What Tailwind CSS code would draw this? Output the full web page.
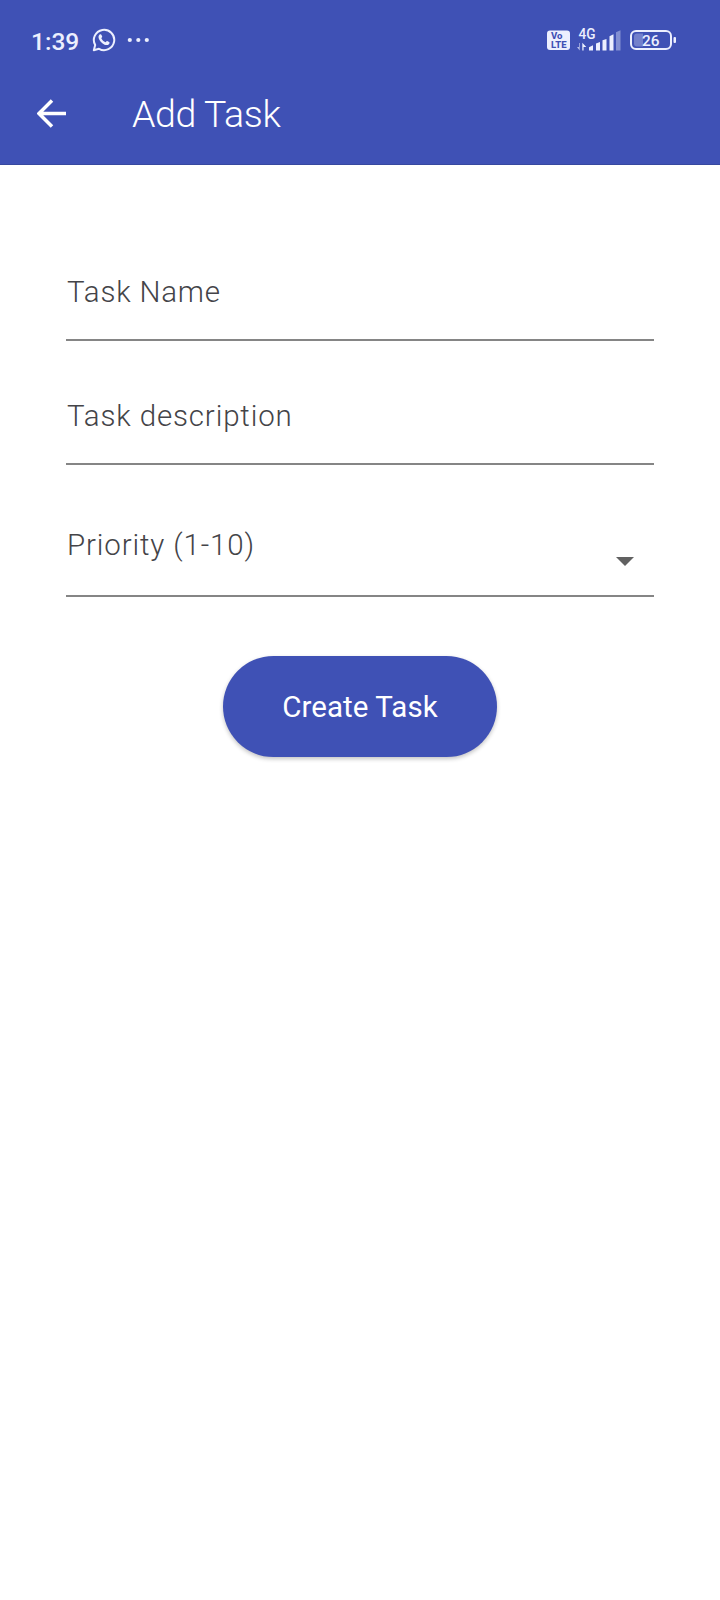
<!DOCTYPE html>
<html lang="en">
<head>
<meta charset="utf-8">
<title>Add Task</title>
<script src="https://cdn.jsdelivr.net/npm/@tailwindcss/browser@4"></script>
</head>
<body class="bg-white font-['Roboto',sans-serif]">
<div class="flex h-[1600px] w-[720px] flex-col overflow-hidden bg-white">
  <header class="h-[165px] border-b border-[#37489f] bg-[#3f51b5] text-white">
    <div class="flex h-20 items-center pr-10 pl-[31px] text-[#eceffe]">
      <span class="w-[61px] pt-[4px] text-[24.500px] leading-7 font-medium whitespace-nowrap">1:39</span>
      <svg class="h-6 w-6" viewBox="0 0 24 24" fill="none" stroke="currentColor" stroke-width="2">
        <path d="M1.8 22.2l1.4-5.2A10.2 10.2 0 1 1 7 20.8z" stroke-linejoin="round"/>
        <path d="M7.6 6.6c.7-.7 1.5-.6 1.9.3l.7 1.7c.2.5-.5 1.100-.9 1.600.9 1.900 2.300 3.200 4.200 4 .6-.5 1.100-1.500 1.700-1.200l1.900.9c.8.5.4 1.600-.2 2.300-1.500 1.600-4.300.9-6.600-1-2.200-1.800-4-4.400-3.800-6.400.1-.9.500-1.700 1.100-2.200z" fill="currentColor" stroke="none"/>
      </svg>
      <svg class="ml-[11px] h-6 w-6" viewBox="0 0 24 24" fill="currentColor"><circle cx="2.800" cy="12" r="2.100"/><circle cx="11.300" cy="12" r="2.100"/><circle cx="19.800" cy="12" r="2.100"/></svg>
      <svg class="ml-auto h-[50px] w-[140px]" viewBox="0 0 140 50" fill="currentColor" font-family="Roboto, sans-serif">
        <rect x="7" y="15.500" width="23" height="19.500" rx="3"/>
        <g fill="#3f51b5" font-weight="800" font-size="8.500"><text x="11" y="24.300" textLength="11.500" lengthAdjust="spacingAndGlyphs">Vo</text><text x="11" y="32.800" textLength="15.500" lengthAdjust="spacingAndGlyphs">LTE</text></g>
        <text x="38.500" y="23.800" font-size="14" font-weight="500" textLength="17" lengthAdjust="spacingAndGlyphs">4G</text>
        <path d="M39 28v4h-2l2.700 3.500V28z" opacity=".7"/>
        <path d="M42.300 35.500v-7.700l4 4.200h-2.700v3.500z"/>
        <path d="M49 32.200l4-2v5.300h-4zM56 28.400l4-1.400v8.500h-4zM62.500 25.300l4-1.400v11.600h-4zM69.500 21.300l4-2v16.200h-4z"/>
        <path d="M76 17.300l4.500-2v20.200H76z" opacity=".4"/>
        <rect x="91" y="16" width="40" height="18" rx="5" fill="none" stroke="currentColor" stroke-width="2"/>
        <path d="M97 18.500h6v13h-6q-3 0-3-3v-7q0-3 3-3z" opacity=".3"/>
        <rect x="133.500" y="22" width="2.500" height="6" rx="1"/>
        <text x="102" y="31" font-size="15.500" font-weight="500" textLength="17.500" lengthAdjust="spacingAndGlyphs">26</text>
      </svg>
    </div>
    <div class="flex h-[70px] items-center pl-[37px]">
      <svg class="mt-[-4px] h-8 w-[30px]" viewBox="0 0 30 32" fill="none" stroke="currentColor" stroke-width="3.500"><path d="M29 16.500H2.500M15 3.500L2 16.500l13 13"/></svg>
      <h1 class="-mt-[3px] ml-[65px] text-[37.500px] leading-[44px] font-light tracking-[-0.35px]">Add Task</h1>
    </div>
  </header>
  <main class="flex flex-col px-[66px] pt-[107px] text-[29.500px] font-light text-[#444448]">
    <div class="h-[69px] border-b-2 border-[#858585] pl-px leading-10 tracking-[0.8px]">Task Name</div>
    <div class="mt-[55px] h-[69px] border-b-2 border-[#858585] pl-px leading-10 tracking-[0.850px]">Task description</div>
    <div class="mt-[60px] flex h-[72px] justify-between border-b-2 border-[#858585] pr-5 pl-px leading-10 tracking-[0.850px]">
      <span>Priority (1-10)</span>
      <svg class="mt-[32px] h-[9px] w-[18px]" viewBox="0 0 18 9" fill="#616161"><path d="M0 0h18L9 9z"/></svg>
    </div>
    <button class="mt-[59px] flex h-[101px] w-[274px] items-center justify-center self-center rounded-full bg-[#3f51b5] pt-px text-[29.500px] font-normal tracking-[0.050px] text-white shadow-[0_2px_4px_rgba(0,0,0,0.24)]">Create Task</button>
  </main>
</div>
</body>
</html>
